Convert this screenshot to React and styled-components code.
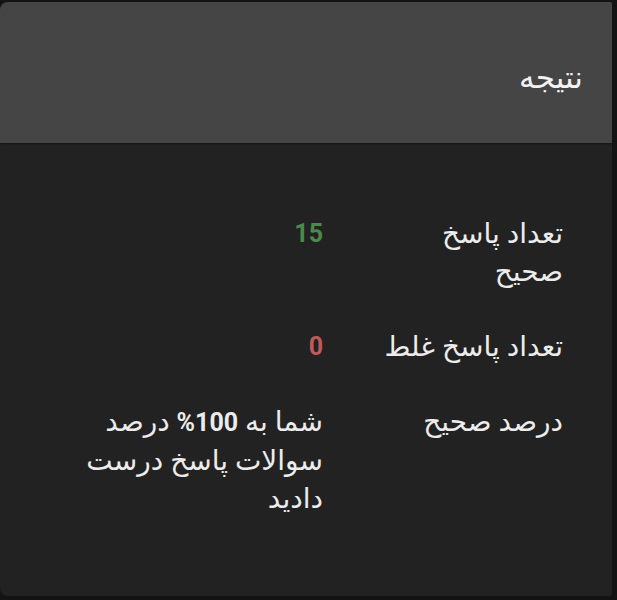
import React from "react";
import styled, { createGlobalStyle } from "styled-components";

const Global = createGlobalStyle`
  html, body { margin: 0; padding: 0; background: #131313; }
  body { font-family: "Roboto", "DejaVu Sans", sans-serif; }
`;

const Card = styled.div`
  direction: rtl;
  width: 612px;
  height: 594px;
  margin: 2px 5px 4px 0;
  background: #222222;
  border-radius: 8px 2px 2px 8px;
  overflow: hidden;
  display: flex;
  flex-direction: column;
  color: #eeeeee;
`;

const Header = styled.div`
  height: 141px;
  box-sizing: border-box;
  flex: none;
  background: #454545;
  display: flex;
  align-items: center;
  padding: 10px 29px 0 0;
  box-shadow: 0 1px 2px rgba(0, 0, 0, 0.4);
`;

const Title = styled.h2`
  margin: 0;
  font-size: 31px;
  font-weight: 400;
  color: #f2f2f2;
  line-height: 40px;
`;

const Body = styled.div`
  padding: 72px 49px 0 0;
  display: grid;
  grid-template-columns: 186px 238px;
  column-gap: 54px;
  row-gap: 37px;
  align-content: start;
  font-size: 28px;
  line-height: 38px;
`;

const Label = styled.div`
  color: #ececec;
`;

const Value = styled.div`
  color: ${(p) => p.$color || "#ececec"};
  font-weight: ${(p) => (p.$bold ? 700 : 400)};
  font-size: ${(p) => (p.$num ? "25px" : "28px")};
`;

const Strong = styled.b`
  font-weight: 700;
  font-size: 25px;
`;

export default function App() {
  return (
    <>
      <Global />
      <Card>
        <Header>
          <Title>نتیجه</Title>
        </Header>
        <Body>
          <Label>تعداد پاسخ صحیح</Label>
          <Value $num $bold $color="#4b8a4b">15</Value>
          <Label>تعداد پاسخ غلط</Label>
          <Value $num $bold $color="#c05a5a">0</Value>
          <Label>درصد صحیح</Label>
          <Value>
            شما به <Strong>100%</Strong> درصد سوالات پاسخ درست دادید
          </Value>
        </Body>
      </Card>
    </>
  );
}
